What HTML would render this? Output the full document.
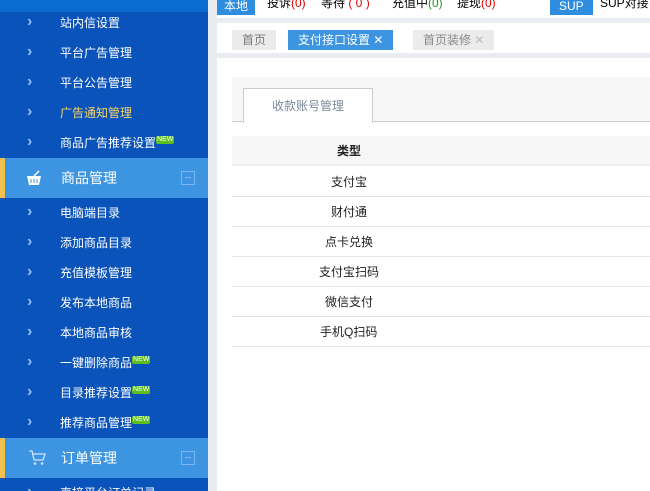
<!DOCTYPE html>
<html><head><meta charset="utf-8"><style>
*{margin:0;padding:0;box-sizing:border-box}
html,body{width:650px;height:491px;overflow:hidden}
body{background:#e9ecf0;font-family:"Liberation Sans","Noto Sans CJK SC",sans-serif;font-size:12px;position:relative}
.sb{position:absolute;left:0;top:0;width:208px;height:491px;background:#0a53ba}
.sbtop{position:absolute;left:0;top:0;width:208px;height:12px;background:#0b6cd0}
.it{position:absolute;left:0;width:208px;height:30px;color:#fff;font-size:12px;line-height:30px}
.it .ar{position:absolute;left:27px;top:-1px;color:#8fc0f0;font-size:16px;font-weight:bold}
.it .t{position:absolute;left:60px}
.new{display:inline-block;background:#5cbf1d;color:#fff;font-size:7px;line-height:8px;padding:0 1px;vertical-align:6px;border-radius:2px}
.sec{position:absolute;left:0;width:208px;height:40px;background:#3d94e0;color:#fff;font-size:14px;line-height:40px}
.sec:before{content:"";position:absolute;left:0;top:0;width:5px;height:40px;background:#f2c14e}
.sec .t{position:absolute;left:61px}
.sec .m{position:absolute;left:181px;top:13px;width:14px;height:14px;border:1px solid #7cb6ec}
.sec .m:after{content:"";position:absolute;left:3px;top:5px;width:6px;height:1px;background:#7cb6ec}
.main{position:absolute;left:217px;top:0;width:433px;height:491px;background:#fff}
.topbar{position:absolute;left:217px;top:0;width:433px;height:16px;background:#fff;font-size:12px;line-height:12px}
.topbar span{position:absolute;top:-3px}
.r{color:#d00}.g{color:#1a9a1a}
.btn{background:#2f8ddf;color:#fff;padding:3px 7px}
.tabs{position:absolute;left:217px;top:18px;width:433px;height:40px;background:#fff;border-top:5px solid #e9ecf0;border-bottom:5px solid #e9ecf0}
.tab{position:absolute;top:7px;height:20px;line-height:20px;font-size:12px;padding:0 10px;background:#ebebeb;color:#777}
</style></head><body>
<div class="sb"></div><div class="sbtop"></div>
<div class="it" style="top:8px"><span class="ar">›</span><span class="t">站内信设置</span></div>
<div class="it" style="top:38px"><span class="ar">›</span><span class="t">平台广告管理</span></div>
<div class="it" style="top:68px"><span class="ar">›</span><span class="t">平台公告管理</span></div>
<div class="it" style="top:98px"><span class="ar">›</span><span class="t" style="color:#f7d46a">广告通知管理</span></div>
<div class="it" style="top:128px"><span class="ar">›</span><span class="t">商品广告推荐设置<span class="new">NEW</span></span></div>
<div class="sec" style="top:158px"><svg style="position:absolute;left:26px;top:12px" width="16" height="16" viewBox="0 0 16 16"><path d="M1 6h14l-2 9H3z" fill="#fff"/><path d="M8 6l5-5" stroke="#fff" stroke-width="1.5"/><path d="M5 9v4M8 9v4M11 9v4" stroke="#3d94e0"/></svg><span class="t">商品管理</span><span class="m"></span></div>
<div class="it" style="top:198px"><span class="ar">›</span><span class="t">电脑端目录</span></div>
<div class="it" style="top:228px"><span class="ar">›</span><span class="t">添加商品目录</span></div>
<div class="it" style="top:258px"><span class="ar">›</span><span class="t">充值模板管理</span></div>
<div class="it" style="top:288px"><span class="ar">›</span><span class="t">发布本地商品</span></div>
<div class="it" style="top:318px"><span class="ar">›</span><span class="t">本地商品审核</span></div>
<div class="it" style="top:348px"><span class="ar">›</span><span class="t">一键删除商品<span class="new">NEW</span></span></div>
<div class="it" style="top:378px"><span class="ar">›</span><span class="t">目录推荐设置<span class="new">NEW</span></span></div>
<div class="it" style="top:408px"><span class="ar">›</span><span class="t">推荐商品管理<span class="new">NEW</span></span></div>
<div class="sec" style="top:438px"><svg style="position:absolute;left:28px;top:12px" width="18" height="16" viewBox="0 0 18 16"><path d="M1 1h3l2 9h9l2-6H5" fill="none" stroke="#cfe4fa" stroke-width="1.3"/><circle cx="7" cy="13.5" r="1.3" fill="#cfe4fa"/><circle cx="14" cy="13.5" r="1.3" fill="#cfe4fa"/></svg><span class="t">订单管理</span><span class="m"></span></div>
<div class="it" style="top:478px"><span class="ar">›</span><span class="t">直接平台订单记录</span></div>

<div class="main"></div>
<div class="topbar">
<span class="btn" style="left:0">本地</span>
<span style="left:50px">投诉<span class="r" style="position:static">(0)</span></span>
<span style="left:104px">等待<span class="r" style="position:static"> ( 0 )</span></span>
<span style="left:175px">充值中<span class="g" style="position:static">(0)</span></span>
<span style="left:240px">提现<span class="r" style="position:static">(0)</span></span>
<span class="btn" style="left:333px;padding:3px 9px">SUP</span>
<span style="left:383px">SUP对接</span>
</div>
<div class="tabs">
<span class="tab" style="left:15px">首页</span>
<span class="tab" style="left:71px;background:#3d94e0;color:#fff">支付接口设置 ✕</span>
<span class="tab" style="left:196px;color:#888">首页装修 <span style="color:#bbb">✕</span></span>
</div>
<div style="position:absolute;left:232px;top:77px;width:418px;height:45px;background:#f7f7f7;border-bottom:1px solid #ccc"></div>
<div style="position:absolute;left:243px;top:88px;width:130px;height:35px;background:#fff;border:1px solid #ccc;border-bottom:none;color:#7a8a9a;font-size:12px;text-align:center;line-height:34px">收款账号管理</div>
<div style="position:absolute;left:232px;top:136px;width:418px;height:30px;background:#f6f6f6;border-bottom:2px solid #eee;line-height:30px;font-size:12px;color:#222"><span style="position:absolute;left:105px;font-weight:bold">类型</span></div>
<div style="position:absolute;left:232px;top:167px;width:418px;font-size:12px;color:#222">
<div style="height:30px;line-height:30px;border-bottom:1px solid #e6e6e6;padding-left:99px">支付宝</div>
<div style="height:30px;line-height:30px;border-bottom:1px solid #e6e6e6;padding-left:99px">财付通</div>
<div style="height:30px;line-height:30px;border-bottom:1px solid #e6e6e6;padding-left:93px">点卡兑换</div>
<div style="height:30px;line-height:30px;border-bottom:1px solid #e6e6e6;padding-left:87px">支付宝扫码</div>
<div style="height:30px;line-height:30px;border-bottom:1px solid #e6e6e6;padding-left:93px">微信支付</div>
<div style="height:30px;line-height:30px;border-bottom:1px solid #e6e6e6;padding-left:88px">手机Q扫码</div>
</div>
</body></html>
